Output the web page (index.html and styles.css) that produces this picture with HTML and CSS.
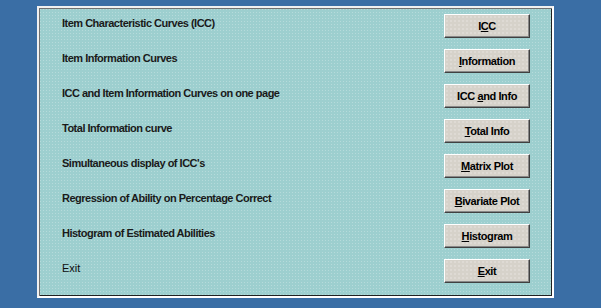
FILE: index.html
```html
<!DOCTYPE html>
<html lang="en">
<head>
    <meta charset="UTF-8">
    <meta name="viewport" content="width=device-width, initial-scale=1.0">
    <title>Graphics Menu</title>
    <link rel="stylesheet" href="styles.css">
</head>
<body>
    <div class="panel">
        <div class="row">
            <span class="label">Item Characteristic Curves (ICC)</span>
            <button class="btn">I<u>C</u>C</button>
        </div>
        <div class="row">
            <span class="label">Item Information Curves</span>
            <button class="btn"><u>I</u>nformation</button>
        </div>
        <div class="row">
            <span class="label">ICC and Item Information Curves on one page</span>
            <button class="btn">ICC <u>a</u>nd Info</button>
        </div>
        <div class="row">
            <span class="label">Total Information curve</span>
            <button class="btn"><u>T</u>otal Info</button>
        </div>
        <div class="row">
            <span class="label">Simultaneous display of ICC's</span>
            <button class="btn"><u>M</u>atrix Plot</button>
        </div>
        <div class="row">
            <span class="label">Regression of Ability on Percentage Correct</span>
            <button class="btn"><u>B</u>ivariate Plot</button>
        </div>
        <div class="row">
            <span class="label">Histogram of Estimated Abilities</span>
            <button class="btn"><u>H</u>istogram</button>
        </div>
        <div class="row">
            <span class="label label-plain">Exit</span>
            <button class="btn"><u>E</u>xit</button>
        </div>
    </div>
</body>
</html>
```

FILE: styles.css
```css
body {
    margin: 0;
    height: 308px;
    background-color: #3a6ea5;
    font-family: "Liberation Sans", Arial, sans-serif;
    overflow: hidden;
}

/* teal dialog panel */
.panel {
    margin: 6px 0 0 37px;
    width: 513px;
    height: 288px;
    background-color: #9dcfcf;
    background-image: radial-gradient(rgba(255, 255, 255, 0.25) 0.5px, transparent 0.8px);
    background-size: 3px 3px;
    border: 2px solid #f0f0f0;
    border-right-color: #ffffff;
    border-bottom-color: #ffffff;
    box-shadow: inset 1px 1px 0 #707070, inset -1px -1px 0 #202020;
    display: flex;
    flex-direction: column;
}

.row {
    height: 35px;
    display: flex;
    align-items: center;
    justify-content: space-between;
    padding: 0 22px 0 23px;
}

.label {
    font-size: 11px;
    font-weight: bold;
    letter-spacing: -0.5px;
    color: #1a1a1a;
    padding-bottom: 6px;
}

.label-plain {
    font-weight: normal;
    letter-spacing: 0;
    color: #0d0d0d;
}

.btn {
    width: 86px;
    height: 24px;
    padding: 0;
    margin-top: 1px;
    font-family: "Liberation Sans", Arial, sans-serif;
    font-size: 11px;
    font-weight: bold;
    letter-spacing: -0.4px;
    color: #000;
    background-color: #d6d2ca;
    background-image: radial-gradient(rgba(255, 255, 255, 0.6) 0.5px, transparent 0.8px);
    background-size: 4px 4px;
    border: 1px solid;
    border-color: #ffffff #404040 #404040 #ffffff;
    box-shadow: inset -1px -1px 0 #888;
    cursor: pointer;
}

.btn u {
    text-underline-offset: 1px;
}
```
